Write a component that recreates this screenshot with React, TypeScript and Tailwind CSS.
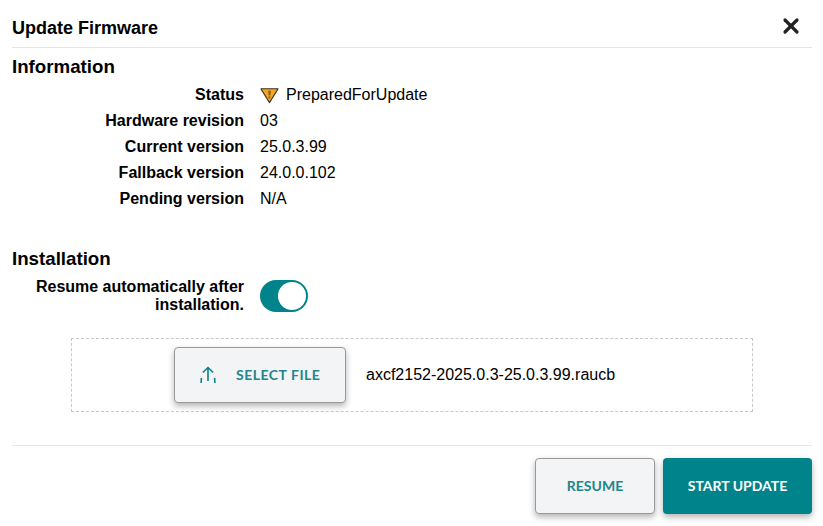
import { X } from 'lucide-react';

const rows = [
  { label: 'Hardware revision', value: '03' },
  { label: 'Current version', value: '25.0.3.99' },
  { label: 'Fallback version', value: '24.0.0.102' },
  { label: 'Pending version', value: 'N/A' },
];

function WarningIcon() {
  return (
    <svg width="19" height="17" viewBox="0 0 20 17" className="shrink-0">
      <path d="M1 1.5H19L10 16Z" fill="#f8a51f" stroke="#3d3320" strokeWidth="1.1" strokeLinejoin="round" />
      <path d="M8.4 3.5h3.2l-.7 5h-1.8Z" fill="#8a6420" />
      <rect x="9" y="9.4" width="2" height="2" fill="#8a6420" />
    </svg>
  );
}

function UploadIcon() {
  return (
    <svg width="18" height="18" viewBox="0 0 18 18" fill="none" stroke="#0b8288" strokeWidth="1.6" className="shrink-0">
      <path d="M9 16V2.5M3.8 7.5 9 2.5l5.2 5" />
      <path d="M2.4 13l-.3 5M15.6 13l.3 5" />
    </svg>
  );
}

function Row({ label, children }: { label: string; children: React.ReactNode }) {
  return (
    <div className="flex h-[26px] items-center">
      <div className="w-[232px] text-right font-bold">{label}</div>
      <div className="ml-4 flex items-center gap-[7px]">{children}</div>
    </div>
  );
}

export default function App() {
  return (
    <div className="h-[526px] w-[823px] overflow-hidden bg-white pl-3 pr-[11px] text-base text-black font-['Liberation_Sans',Arial,sans-serif]">
      {/* Header */}
      <div className="flex h-[48px] items-center justify-between border-b border-[#e4e4ea] pt-[8px]">
        <h2 className="text-lg font-bold">Update Firmware</h2>
        <X className="mr-[9px] mb-[3px] h-[24px] w-[24px] text-[#222]" strokeWidth={3.2} />
      </div>

      {/* Information */}
      <h3 className="mt-[7px] text-[18.72px] leading-[24px] font-bold">Information</h3>
      <div className="mt-[3px]">
        <Row label="Status">
          <WarningIcon />
          <span>PreparedForUpdate</span>
        </Row>
        {rows.map((row) => (
          <Row key={row.label} label={row.label}>
            {row.value}
          </Row>
        ))}
      </div>

      {/* Installation */}
      <h3 className="mt-[35px] text-[18.72px] leading-[24px] font-bold">Installation</h3>
      <div className="mt-[7px] flex items-center">
        <div className="w-[232px] text-right leading-[18px] font-bold">
          Resume automatically after installation.
        </div>
        <div className="ml-4 flex h-[32px] w-[48px] items-center justify-end rounded-full bg-[#00838a] pr-[2px]">
          <div className="h-[28px] w-[28px] rounded-full bg-white" />
        </div>
      </div>

      {/* File picker */}
      <div className="mt-[24px] ml-[59px] flex h-[74px] w-[682px] items-center border border-dashed border-[#c8c8c8] pl-[102px]">
        <button
          type="button"
          className="flex h-[56px] w-[172px] items-center rounded border border-[#999] bg-[#f2f4f6] pb-[2px] pl-[24px] text-[14px] font-bold tracking-[0.5px] text-[#22868c] shadow-[0_3px_6px_rgba(0,0,0,0.3)] font-['Lato',sans-serif]"
        >
          <UploadIcon />
          <span className="ml-[19px]">SELECT FILE</span>
        </button>
        <span className="ml-5">axcf2152-2025.0.3-25.0.3.99.raucb</span>
      </div>

      {/* Footer */}
      <div className="mt-[33px] flex justify-end gap-2 border-t border-[#e6e6e6] pt-[12px]">
        <button
          type="button"
          className="h-[56px] w-[120px] rounded border border-[#999] bg-[#f2f4f6] pb-[2px] text-[14px] font-bold text-[#22868c] shadow-[0_3px_6px_rgba(0,0,0,0.3)] font-['Lato',sans-serif]"
        >
          RESUME
        </button>
        <button
          type="button"
          className="h-[56px] w-[149px] rounded bg-[#00838a] pb-[2px] text-[14px] font-bold text-white shadow-[0_3px_6px_rgba(0,0,0,0.3)] font-['Lato',sans-serif]"
        >
          START UPDATE
        </button>
      </div>
    </div>
  );
}
